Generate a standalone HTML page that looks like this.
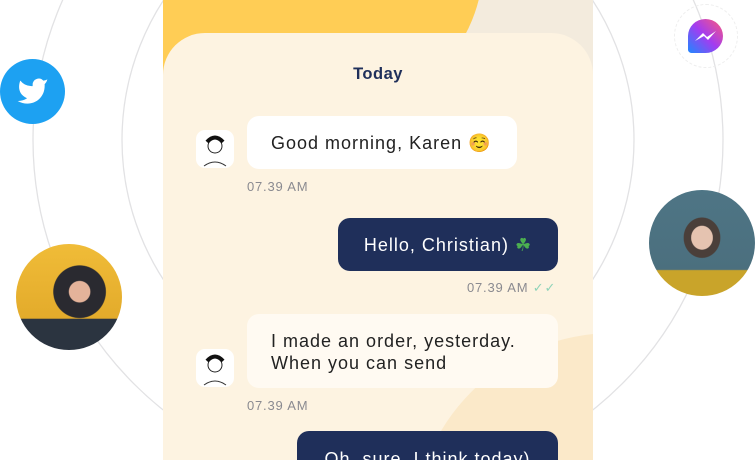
<!DOCTYPE html>
<html><head><meta charset="utf-8"><style>
*{margin:0;padding:0;box-sizing:border-box}
html,body{width:756px;height:460px;overflow:hidden}
body{background:#fff;position:relative;font-family:"Liberation Sans",sans-serif}
.abs{position:absolute}
.phone{left:163px;top:0;width:430px;height:460px;overflow:hidden;background:#f3ebdd}
.card{left:0;top:33px;width:430px;height:427px;border-radius:42px 42px 0 0;background:#fdf3e1;overflow:hidden}
.bub{position:absolute;border-radius:12px;font-size:18px;letter-spacing:1px;line-height:22px;white-space:nowrap}
.in{background:#fff;color:#222}
.out{background:#1f2f5a;color:#fff;text-align:center}
.t{position:absolute;font-size:13px;color:#8a8a90;letter-spacing:.8px}
.av{position:absolute;width:38px;height:38px;border-radius:9px;background:#fff}
</style></head><body>
<svg class="abs" style="left:0;top:0" width="756" height="460">
<circle cx="378" cy="140" r="345" fill="none" stroke="#e2e2e4" stroke-width="1.3"/>
<circle cx="378" cy="140" r="256" fill="none" stroke="#e2e2e4" stroke-width="1.3"/>
</svg>
<div class="abs phone">
<div class="abs" style="left:-60px;top:-200px;width:380px;height:330px;border-radius:50%;background:#ffcd55"></div>
<div class="abs card">
<div class="abs" style="left:250px;top:300px;width:400px;height:400px;border-radius:50%;background:#fbe9c9"></div>
<div style="position:absolute;top:32px;width:100%;text-align:center;font-weight:bold;font-size:16.5px;color:#1f2f5a;letter-spacing:.5px">Today</div>
<div class="av" style="left:33px;top:97px"><svg width="38" height="38"><circle cx="19" cy="16" r="7" fill="none" stroke="#222"/><path d="M11 12q8-9 16 0" stroke="#111" stroke-width="4" fill="none"/><path d="M8 36q11-8 22 0" fill="none" stroke="#333"/></svg></div>
<div class="bub in" style="left:84px;top:83px;width:270px;height:53px;padding:16px 24px">Good morning, Karen ☺️</div>
<div class="t" style="left:84px;top:146px">07.39 AM</div>
<div class="bub out" style="left:175px;top:185px;width:220px;height:53px;padding:16px 0">Hello, Christian) <span style="color:#4caf50">☘</span></div>
<div class="t" style="left:304px;top:247px">07.39 AM <span style="color:#8ed3b8">✓✓</span></div>
<div class="av" style="left:33px;top:316px"><svg width="38" height="38"><circle cx="19" cy="16" r="7" fill="none" stroke="#222"/><path d="M11 12q8-9 16 0" stroke="#111" stroke-width="4" fill="none"/><path d="M8 36q11-8 22 0" fill="none" stroke="#333"/></svg></div>
<div class="bub in" style="left:84px;top:281px;width:311px;height:74px;padding:16px 24px;background:#fffaf2">I made an order, yesterday.<br>When you can send</div>
<div class="t" style="left:84px;top:365px">07.39 AM</div>
<div class="bub out" style="left:134px;top:398px;width:261px;height:60px;padding:17px 0">Oh, sure, I think today)</div>
</div></div>
<div class="abs" style="left:0;top:59px;width:65px;height:65px;border-radius:50%;background:#1da1f2"><svg width="65" height="65" viewBox="0 0 24 24"><path transform="translate(6 6) scale(.5)" fill="#fff" d="M23 3a10 10 0 0 1-3 1 4.5 4.5 0 0 0-7.9 3v1A10.7 10.7 0 0 1 3 4s-4 9 5 13a11.6 11.6 0 0 1-7 2c9 5 20 0 20-11.5 0-.3 0-.6-.1-.8A7.7 7.7 0 0 0 23 3z"/></svg></div>
<div class="abs" style="left:674px;top:4px;width:64px;height:64px;border-radius:50%;border:1px dashed #eee"></div>
<div class="abs" style="left:688px;top:19px;width:35px;height:34px;border-radius:50% 50% 50% 10%;background:linear-gradient(45deg,#1e88ff,#a33cf0,#ff5a7a)"><svg width="35" height="34"><path d="M7 22l8-8 4 4 9-6-8 9-4-4z" fill="#fff"/></svg></div>
<div class="abs" style="left:16px;top:244px;width:106px;height:106px;border-radius:50%;background:radial-gradient(circle at 60% 45%,#e4b39a 0 12%,#2a2a30 13% 30%,transparent 31%),linear-gradient(#f0bc38,#e3ab2b 70%,#2b3440 71%)"></div>
<div class="abs" style="left:649px;top:190px;width:106px;height:106px;border-radius:50%;background:radial-gradient(ellipse at 50% 45%,#e5c3b0 0 14%,#4a3f3a 15% 24%,transparent 25%),linear-gradient(#4e7585,#4b6f7e 75%,#c9a42a 76%)"></div>
</body></html>
